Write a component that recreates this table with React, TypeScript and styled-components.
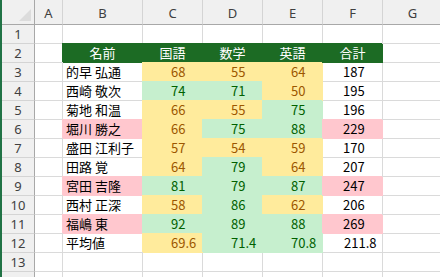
import React from "react";
import styled, { createGlobalStyle } from "styled-components";

const GRID = "#dadada";
const HEAD_LINE = "#a8a8a8";
const GREEN_HEAD = "#1c6b24";

const FILLS = {
  none: { bg: "#ffffff", fg: "#000000" },
  good: { bg: "#c6efce", fg: "#006100" },
  neutral: { bg: "#ffeb9c", fg: "#9c5700" },
  bad: { bg: "#ffc7ce", fg: "#000000" },
  head: { bg: GREEN_HEAD, fg: "#ffffff" },
};

type Fill = keyof typeof FILLS;

const GlobalStyle = createGlobalStyle`
  html, body {
    margin: 0;
    padding: 0;
    background: #ffffff;
    overflow: hidden;
  }
  body {
    font-family: "Noto Sans CJK JP", "Noto Sans", sans-serif;
  }
`;

const Sheet = styled.div`
  display: grid;
  grid-template-columns: 33px 28px 80px 60px 60px 60px 60px 60px;
  grid-template-rows: 25px repeat(14, 19px);
  border-left: 2px solid #217346;
  width: 440px;
  height: 277px;
  overflow: hidden;
  box-sizing: border-box;
`;

const Corner = styled.div`
  position: relative;
  background: #f0f0f0;
  border-right: 1px solid ${HEAD_LINE};
  border-bottom: 1px solid ${HEAD_LINE};

  &::after {
    content: "";
    position: absolute;
    right: 3px;
    bottom: 3px;
    border-style: solid;
    border-width: 0 0 12px 12px;
    border-color: transparent transparent #dcdcdc transparent;
  }
`;

const ColHeader = styled.div`
  background: #f0f0f0;
  border-right: 1px solid #d4d4d4;
  border-bottom: 1px solid ${HEAD_LINE};
  color: #404040;
  font-family: "Noto Sans", sans-serif;
  font-size: 13px;
  display: flex;
  align-items: center;
  justify-content: center;
  padding-top: 1px;
`;

const RowHeader = styled.div`
  background: #f0f0f0;
  border-right: 1px solid ${HEAD_LINE};
  border-bottom: 1px solid #d4d4d4;
  color: #404040;
  font-family: "Noto Sans", sans-serif;
  font-size: 13px;
  display: flex;
  align-items: center;
  justify-content: center;
`;

const Cell = styled.div<{ $fill: Fill; $align: "left" | "center"; $pad: number }>`
  box-sizing: border-box;
  background: ${(p) => FILLS[p.$fill].bg};
  color: ${(p) => FILLS[p.$fill].fg};
  border-right: 1px solid ${(p) => (p.$fill === "none" ? GRID : FILLS[p.$fill].bg)};
  border-bottom: 1px solid ${(p) => (p.$fill === "none" ? GRID : FILLS[p.$fill].bg)};
  box-shadow: ${(p) => (p.$fill === "none" ? "none" : `-1px -1px 0 0 ${FILLS[p.$fill].bg}`)};
  font-size: 13px;
  line-height: 18px;
  white-space: nowrap;
  text-align: ${(p) => p.$align};
  padding-left: ${(p) => p.$pad}px;
`;

type Row = { name: string; scores: number[]; total: number };

const rows: Row[] = [
  { name: "的早 弘通", scores: [68, 55, 64], total: 187 },
  { name: "西崎 敬次", scores: [74, 71, 50], total: 195 },
  { name: "菊地 和温", scores: [66, 55, 75], total: 196 },
  { name: "堀川 勝之", scores: [66, 75, 88], total: 229 },
  { name: "盛田 江利子", scores: [57, 54, 59], total: 170 },
  { name: "田路 覚", scores: [64, 79, 64], total: 207 },
  { name: "宮田 吉隆", scores: [81, 79, 87], total: 247 },
  { name: "西村 正深", scores: [58, 86, 62], total: 206 },
  { name: "福嶋 東", scores: [92, 89, 88], total: 269 },
];

const averages = ["69.6", "71.4", "70.8"];
const letters = ["A", "B", "C", "D", "E", "F", "G"];
const heads = ["名前", "国語", "数学", "英語", "合計"];

const scoreFill = (v: number): Fill => (v >= 70 ? "good" : "neutral");
const totalFill = (v: number): Fill => (v >= 220 ? "bad" : "none");

function Blank() {
  return <Cell $fill="none" $align="left" $pad={0} />;
}

function EmptyRow({ label }: { label?: string }) {
  return (
    <>
      <RowHeader>{label}</RowHeader>
      {letters.map((l) => (
        <Blank key={l} />
      ))}
    </>
  );
}

export default function App() {
  return (
    <>
      <GlobalStyle />
      <Sheet>
        <Corner />
        {letters.map((l) => (
          <ColHeader key={l}>{l}</ColHeader>
        ))}

        <EmptyRow label="1" />

        {/* row 2: table head */}
        <RowHeader>2</RowHeader>
        <Blank />
        {heads.map((h) => (
          <Cell key={h} $fill="head" $align="center" $pad={0}>
            {h}
          </Cell>
        ))}
        <Blank />

        {rows.map((r, i) => (
          <React.Fragment key={r.name}>
            <RowHeader>{i + 3}</RowHeader>
            <Blank />
            <Cell $fill={totalFill(r.total)} $align="left" $pad={3}>
              {r.name}
            </Cell>
            {r.scores.map((s, j) => (
              <Cell key={j} $fill={scoreFill(s)} $align="left" $pad={28}>
                {s}
              </Cell>
            ))}
            <Cell $fill={totalFill(r.total)} $align="left" $pad={20}>
              {r.total}
            </Cell>
            <Blank />
          </React.Fragment>
        ))}

        {/* row 12: averages */}
        <RowHeader>12</RowHeader>
        <Blank />
        <Cell $fill="none" $align="left" $pad={3}>
          平均値
        </Cell>
        {averages.map((a) => (
          <Cell key={a} $fill={scoreFill(parseFloat(a))} $align="left" $pad={28}>
            {a}
          </Cell>
        ))}
        <Cell $fill="none" $align="left" $pad={21}>
          211.8
        </Cell>
        <Blank />

        <EmptyRow label="13" />
        {/* row 14 only peeks in at the bottom edge */}
        <EmptyRow />
      </Sheet>
    </>
  );
}
